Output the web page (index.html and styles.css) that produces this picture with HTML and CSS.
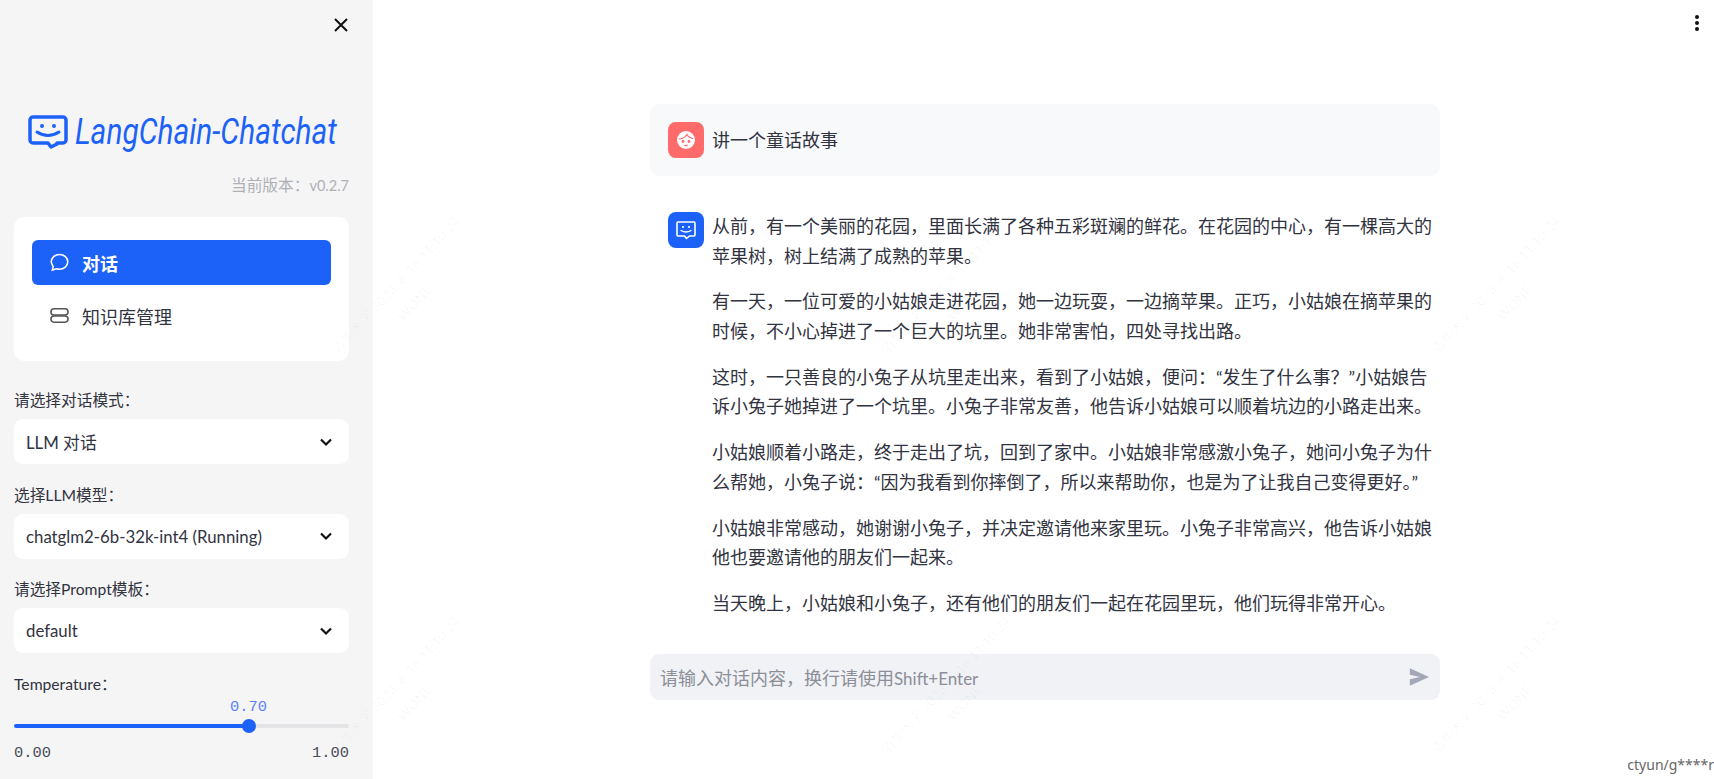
FILE: index.html
```html
<!DOCTYPE html>
<html lang="zh">
<head>
<meta charset="utf-8">
<title>LangChain-Chatchat</title>
<link rel="stylesheet" href="styles.css">
</head>
<body>
<div class="app">
  <aside class="sidebar">
    <div class="close-row">
      <svg class="close-icon" viewBox="0 0 16 16"><path d="M2 2L14 14M14 2L2 14"/></svg>
    </div>
    <div class="logo">
      <svg class="logo-icon" viewBox="0 0 40 34"><path class="logo-frame" d="M5 2H35a3 3 0 0 1 3 3V25a3 3 0 0 1-3 3H29V29L23 32L20 28H5a3 3 0 0 1-3-3V5a3 3 0 0 1 3-3Z"/><circle class="logo-eye" cx="14" cy="11" r="2"/><circle class="logo-eye" cx="26" cy="11" r="2"/><path class="logo-smile" d="M9 17Q20 24 31 17"/></svg>
      <span class="logo-text">LangChain-Chatchat</span>
    </div>
    <div class="version">当前版本：<span class="version-num">v0.2.7</span></div>
    <nav class="menu">
      <div class="menu-item active">
        <svg class="menu-icon" viewBox="0 0 20 20"><path d="M10 1.500c4.800 0 8.700 3.400 8.700 7.800s-3.900 7.800-8.700 7.800c-1.100 0-2.100-.2-3-.5l-4.600 1.400 1-3.800C2.200 12.400 1.300 10.900 1.300 9.300c0-4.400 3.900-7.800 8.700-7.800Z"/></svg>
        <span>对话</span>
      </div>
      <div class="menu-item">
        <svg class="menu-icon" viewBox="0 0 20 20"><rect x="1" y="3" width="18" height="6.500" rx="3.200"/><rect x="1" y="10.500" width="18" height="6.500" rx="3.200"/></svg>
        <span>知识库管理</span>
      </div>
    </nav>
    <label class="field-label">请选择对话模式：</label>
    <div class="select"><span>LLM 对话</span><svg class="chevron" viewBox="0 0 16 16"><path d="M3 5.500L8 10.500L13 5.500"/></svg></div>
    <label class="field-label">选择LLM模型：</label>
    <div class="select"><span>chatglm2-6b-32k-int4 (Running)</span><svg class="chevron" viewBox="0 0 16 16"><path d="M3 5.500L8 10.500L13 5.500"/></svg></div>
    <label class="field-label">请选择Prompt模板：</label>
    <div class="select"><span>default</span><svg class="chevron" viewBox="0 0 16 16"><path d="M3 5.500L8 10.500L13 5.500"/></svg></div>
    <label class="field-label temp-label">Temperature：</label>
    <div class="slider">
      <div class="slider-value-row"><span class="slider-value">0.70</span></div>
      <div class="track"><div class="track-fill" style="width:70%"><span class="thumb"></span></div></div>
      <div class="slider-range"><span>0.00</span><span>1.00</span></div>
    </div>
  </aside>
  <main class="main">
    <svg class="more-icon" viewBox="0 0 6 20"><circle cx="3" cy="3" r="2"/><circle cx="3" cy="9" r="2"/><circle cx="3" cy="15" r="2"/></svg>
    <div class="chat">
      <div class="message user">
        <div class="avatar avatar-user">
          <svg viewBox="0 0 24 24"><circle class="face" cx="12" cy="12" r="9"/><path class="hair" d="M4.800 11Q10 11 13 6.500Q15 10 19.200 10.500"/><circle class="eye" cx="9" cy="13.500" r="1.400"/><circle class="eye" cx="15" cy="13.500" r="1.400"/><path class="mouth" d="M10.300 17Q12 18.200 13.700 17"/></svg>
        </div>
        <div class="msg-body"><p>讲一个童话故事</p></div>
      </div>
      <div class="message assistant">
        <div class="avatar avatar-bot">
          <svg viewBox="0 0 24 24"><path class="bot-frame" d="M4 4H20a1 1 0 0 1 1 1V17a1 1 0 0 1-1 1H15.500L12.500 20.500L10.500 18H4a1 1 0 0 1-1-1V5a1 1 0 0 1 1-1Z"/><circle class="bot-eye" cx="9" cy="9" r="1.100"/><circle class="bot-eye" cx="15" cy="9" r="1.100"/><path class="bot-smile" d="M7 12.500Q12 15.500 17 12.500"/></svg>
        </div>
        <div class="msg-body">
          <p>从前，有一个美丽的花园，里面长满了各种五彩斑斓的鲜花。在花园的中心，有一棵高大的苹果树，树上结满了成熟的苹果。</p>
          <p>有一天，一位可爱的小姑娘走进花园，她一边玩耍，一边摘苹果。正巧，小姑娘在摘苹果的时候，不小心掉进了一个巨大的坑里。她非常害怕，四处寻找出路。</p>
          <p>这时，一只善良的小兔子从坑里走出来，看到了小姑娘，便问：“发生了什么事？”小姑娘告诉小兔子她掉进了一个坑里。小兔子非常友善，他告诉小姑娘可以顺着坑边的小路走出来。</p>
          <p>小姑娘顺着小路走，终于走出了坑，回到了家中。小姑娘非常感激小兔子，她问小兔子为什么帮她，小兔子说：“因为我看到你摔倒了，所以来帮助你，也是为了让我自己变得更好。”</p>
          <p>小姑娘非常感动，她谢谢小兔子，并决定邀请他来家里玩。小兔子非常高兴，他告诉小姑娘他也要邀请他的朋友们一起来。</p>
          <p>当天晚上，小姑娘和小兔子，还有他们的朋友们一起在花园里玩，他们玩得非常开心。</p>
        </div>
      </div>
      <div class="chat-input">
        <span class="placeholder">请输入对话内容，换行请使用<span class="placeholder-latin">Shift+Enter</span></span>
        <svg class="send-icon" viewBox="0 0 24 24"><path d="M2 21.500V14.500L13 12L2 9.500V2.500L23 12Z"/></svg>
      </div>
    </div>
    <div class="user-tag">ctyun/g****r</div>
  </main>
  <div class="watermarks" aria-hidden="true">
    <span class="wm wm1">清华大学 2023/8/16 11:10:24<br>WONE</span>
    <span class="wm wm2">清华大学 2023/8/16 11:10:24<br>WONE</span>
    <span class="wm wm3">清华大学 2023/8/16 11:10:24<br>WONE</span>
    <span class="wm wm4">清华大学 2023/8/16 11:10:24<br>WONE</span>
    <span class="wm wm5">清华大学 2023/8/16 11:10:24<br>WONE</span>
    <span class="wm wm6">清华大学 2023/8/16 11:10:24<br>WONE</span>
  </div>
</div>
</body>
</html>
```

FILE: styles.css
```css
* { box-sizing: border-box; }
html, body { margin: 0; height: 100%; overflow: hidden; }
body {
  font-family: "Lato", "Noto Sans CJK SC", sans-serif;
  color: #31333f;
  background: #fff;
}
.app { display: flex; height: 779px; position: relative; overflow: hidden; }

.sidebar {
  width: 373px;
  flex: none;
  background: #f5f5f5;
  padding: 0 24px 0 14px;
  display: flex;
  flex-direction: column;
}
.close-row { display: flex; justify-content: flex-end; padding: 17px 0 0; height: 115px; margin-right: -1px; }
.close-icon { width: 16px; height: 16px; margin-right: 1px; }
.close-icon path { stroke: #111; stroke-width: 2; fill: none; }

.logo { display: flex; align-items: center; height: 34px; margin-left: 14px; }
.logo-icon { width: 40px; height: 34px; flex: none; }
.logo-frame { fill: none; stroke: #1c62f8; stroke-width: 3.500; stroke-linejoin: round; }
.logo-eye { fill: #1c62f8; }
.logo-smile { fill: none; stroke: #1c62f8; stroke-width: 3; stroke-linecap: round; }
.logo-text {
  font-family: "Roboto", sans-serif;
  font-style: italic;
  font-weight: 400;
  font-size: 36px;
  color: #1c62f8;
  margin-left: 7px;
  white-space: nowrap;
  display: inline-block;
  transform: scaleX(.83);
  transform-origin: left center;
}

.version {
  margin-top: 24px;
  text-align: right;
  font-size: 15.700px;
  line-height: 24px;
  color: #aeb0b5;
}
.version-num { font-size: 14.500px; }

.menu {
  margin-top: 19px;
  height: 144px;
  background: #fff;
  border-radius: 10px;
  padding: 23px 18px 0 18px;
}
.menu-item {
  height: 45px;
  display: flex;
  align-items: center;
  padding-left: 18px;
  gap: 13px;
  border-radius: 6px;
  font-size: 18px;
  color: #31333f;
}
.menu-item + .menu-item { margin-top: 8px; }
.menu-item.active { background: #1c62f8; color: #fff; font-weight: 700; }
.menu-icon { width: 19px; height: 19px; flex: none; fill: none; stroke: #555; stroke-width: 1.600; }
.active .menu-icon { stroke: #fff; }

.field-label {
  display: block;
  margin-top: 27px;
  margin-bottom: 7px;
  font-size: 15.700px;
  line-height: 24px;
  color: #31333f;
}
.select + .field-label { margin-top: 18.500px; }
.select {
  height: 45px;
  background: #fff;
  border-radius: 9px;
  padding: 0 15px 0 12px;
  display: flex;
  align-items: center;
  justify-content: space-between;
  font-size: 16.800px;
  color: #31333f;
}
.chevron { width: 16px; height: 16px; fill: none; stroke: #111; stroke-width: 2.200; }

.temp-label.field-label { margin-bottom: 0; margin-top: 19px; }
.slider-value-row { height: 22px; display: flex; position: relative; padding-top: 1px; }
.slider-value {
  position: absolute;
  left: 70%;
  top: 1px;
  transform: translateX(-50%);
  font-family: "Liberation Mono", monospace;
  font-size: 15.400px;
  line-height: 20px;
  color: #5b82f5;
}
.track { height: 4px; background: #e4e4e6; border-radius: 2px; margin-top: 6px; }
.track-fill { height: 4px; background: #1c62f8; border-radius: 2px; position: relative; }
.thumb {
  position: absolute;
  right: -7px;
  top: -5px;
  width: 14px;
  height: 14px;
  border-radius: 50%;
  background: #1c62f8;
}
.slider-range {
  display: flex;
  justify-content: space-between;
  margin-top: 15px;
  font-family: "Liberation Mono", monospace;
  font-size: 15.400px;
  line-height: 20px;
  color: #4a4c57;
}

.main { flex: 1; position: relative; display: flex; justify-content: center; }
.more-icon { position: absolute; top: 14px; right: 14px; width: 6px; height: 20px; fill: #111; }
.chat { width: 790px; margin-left: 3px; padding-top: 104px; display: flex; flex-direction: column; }
.message { display: flex; gap: 8px; padding: 18px 6px 18px 18px; border-radius: 10px; }
.message.user { background: #f8f9fb; height: 72px; }
.message.assistant { margin-top: 18px; padding-bottom: 0; padding-top: 18px; }
.avatar { width: 36px; height: 36px; flex: none; border-radius: 8px; display: flex; align-items: center; justify-content: center; }
.avatar svg { width: 24px; height: 24px; }
.avatar-user { background: #ff6b6b; }
.avatar-bot { background: #1c62f8; }
.face { fill: #fff; }
.hair { fill: none; stroke: #ff6b6b; stroke-width: 1.200; }
.eye { fill: #ff6b6b; }
.mouth { fill: none; stroke: #ff6b6b; stroke-width: 1.200; }
.bot-frame { fill: none; stroke: #fff; stroke-width: 1.600; stroke-linejoin: round; }
.bot-eye { fill: #fff; }
.bot-smile { fill: none; stroke: #fff; stroke-width: 1.400; stroke-linecap: round; }
.msg-body { flex: 1; min-width: 0; font-size: 18px; line-height: 29.500px; color: #31333f; }
.msg-body p { margin: 0 0 16.400px; }
.msg-body p:last-child { margin-bottom: 0; }
.user .msg-body { line-height: 36px; }

.chat-input {
  margin-top: 36px;
  height: 46px;
  background: #f0f2f6;
  border-radius: 9px;
  padding: 0 10px 0 10px;
  display: flex;
  align-items: center;
  justify-content: space-between;
}
.placeholder { font-size: 18px; color: #8c8e98; }
.placeholder-latin { font-size: 17px; }
.send-icon { width: 22px; height: 22px; fill: #a3a8b8; }

.user-tag {
  position: absolute;
  right: 0;
  top: 755px;
  font-family: "Noto Sans", sans-serif;
  font-size: 14px;
  line-height: 20px;
  color: #666;
  background: #fff;
  white-space: nowrap;
}

.watermarks { position: absolute; inset: 0; pointer-events: none; overflow: hidden; }
.wm {
  position: absolute;
  font-size: 13.500px;
  line-height: 26px;
  text-align: center;
  color: rgba(0, 0, 0, .035);
  white-space: nowrap;
  transform: translate(-50%, -50%) rotate(-47deg);
}
.wm1 { left: 405px; top: 294px; }
.wm2 { left: 955px; top: 294px; }
.wm3 { left: 1505px; top: 294px; }
.wm4 { left: 405px; top: 694px; }
.wm5 { left: 955px; top: 694px; }
.wm6 { left: 1505px; top: 694px; }
```
